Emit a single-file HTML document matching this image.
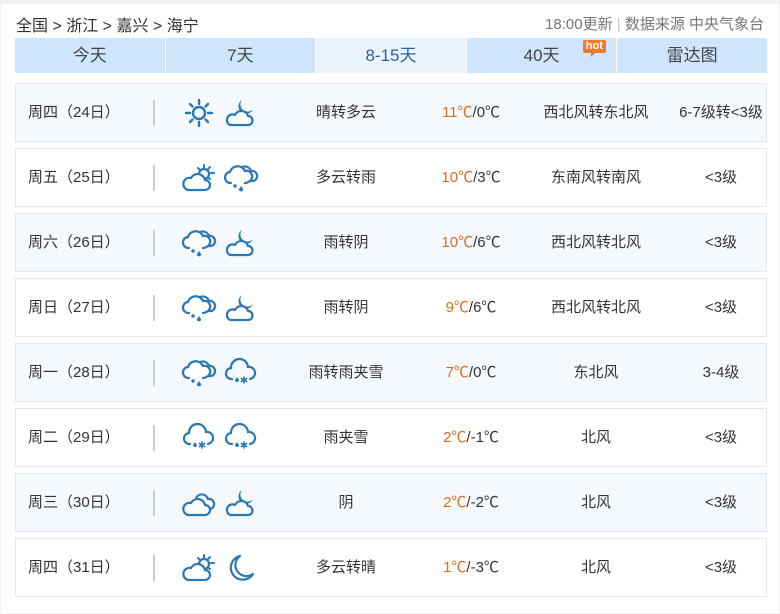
<!DOCTYPE html>
<html><head><meta charset="utf-8">
<style>
*{margin:0;padding:0;box-sizing:border-box}
body{width:780px;height:614px;background:#fff;font-family:"Liberation Sans","Noto Sans CJK SC",sans-serif;color:#333;position:relative;overflow:hidden}
.frame{position:absolute;left:0;top:0;width:780px;height:614px;border:1px solid #eef1f4;border-top:4px solid #eef1f4}
.crumb{position:absolute;left:16px;top:12px;font-size:16px;color:#333}
.src{position:absolute;right:16px;top:13px;font-size:15px;color:#777}
.tabs{position:absolute;left:15px;top:38px;width:752px;height:35px;display:flex}
.tab{flex:1;background:#cde6fb;text-align:center;line-height:35px;font-size:17px;color:#444;margin-right:1px;position:relative}
.tab:last-child{margin-right:0}
.tab.on{background:#eaf4fd;color:#2f5f9e}
.hot{position:absolute;left:116px;top:2px;background:#f27a2a;color:#fff;font-size:11px;line-height:13px;padding:0 3px;border-radius:2px;font-weight:bold}
.hot:after{content:"";position:absolute;left:8px;bottom:-4px;border:3px solid transparent;border-top-color:#f27a2a;border-left-color:#f27a2a}
.row{position:absolute;left:15px;width:752px;height:59px;border:1px solid #e4e8ec;font-size:15px;color:#333}
.row.a{background:#f5f9fd}
.row.b{background:#fff}
.row div{position:absolute;top:0;line-height:57px}
.day{left:12px}
.sep{left:137px;top:16px!important;width:2px;height:26px;background:#ccc}
.i1{left:165px;top:12px!important}
.i2{left:207px;top:12px!important}
.wx{left:250px;width:160px;text-align:center}
.tp{left:395px;width:120px;text-align:center}
.tp b{font-weight:normal;color:#e06b1e}
.wd{left:515px;width:130px;text-align:center}
.lv{left:640px;width:130px;text-align:center}
svg.ic{width:36px;height:32px}
</style></head><body>
<svg width="0" height="0" style="position:absolute">
<defs>
<symbol id="sun" viewBox="0 0 36 32"><g stroke="#2a78b5" stroke-width="2.4" fill="none" stroke-linecap="round"><circle cx="18" cy="16" r="6"/><path d="M18,3v4M18,25v4M5,16h4M27,16h4M9,7l2.5,2.5M24.5,22.5L27,25M27,7l-2.5,2.5M11.5,22.5L9,25"/></g></symbol>
<symbol id="cmoon" viewBox="0 0 36 32"><path d="M19,3 A7.5,7.5 0 1 0 30,12 A6,6 0 0 1 19,3Z" fill="#2a78b5"/><path d="M7,28 H25 A4.5,4.5 0 0 0 25,19 A7,7 0 0 0 12,18 A5,5 0 0 0 7,28 Z" fill="#fff" stroke="#2a78b5" stroke-width="2.2" stroke-linejoin="round"/></symbol>
<symbol id="csun" viewBox="0 0 36 32"><g stroke="#2a78b5" stroke-width="2" stroke-linecap="round"><path d="M23,3v3M30,11h3M17,6l2,2M29,5l-2,2M29,17l-2-1.5"/></g><circle cx="23" cy="12" r="5" fill="#fff" stroke="#2a78b5" stroke-width="2.2"/><path d="M7,28 H24 A5,5 0 0 0 24,18 A7.5,7.5 0 0 0 10,16 A6,6 0 0 0 7,28 Z" fill="#fff" stroke="#2a78b5" stroke-width="2.2"/></symbol>
<symbol id="rain" viewBox="0 0 36 32"><path d="M16,8 A6.5,6.5 0 0 1 28,9 A5,5 0 0 1 30,19 H27" fill="none" stroke="#2a78b5" stroke-width="2.2"/><path d="M8,21 A5.5,5.5 0 0 1 7,10 A8,8 0 0 1 22,9 A5.5,5.5 0 0 1 25,20 Q24,21 22,21" fill="#fff" stroke="#2a78b5" stroke-width="2.2" stroke-linecap="round"/><circle cx="12" cy="24" r="1.7" fill="#2a78b5"/><path d="M18,24 l-2.2,3.2 a2.2,2.2 0 0 0 4.4,0z" fill="#2a78b5"/></symbol>
<symbol id="sleet" viewBox="0 0 36 32"><path d="M9,22 A5.5,5.5 0 0 1 8,11 A8.5,8.5 0 0 1 25,10 A5.5,5.5 0 0 1 27,22" fill="none" stroke="#2a78b5" stroke-width="2.2" stroke-linecap="round"/><path d="M14,20 l-2,3 a2,2 0 0 0 4,0z" fill="#2a78b5"/><g stroke="#2a78b5" stroke-width="1.6" stroke-linecap="round"><path d="M21,20v6M18.4,21.5l5.2,3M18.4,24.5l5.2-3"/></g></symbol>
<symbol id="cloudy" viewBox="0 0 36 32"><path d="M15,11 A6.5,6.5 0 0 1 27,12 A5,5 0 0 1 29,22" fill="none" stroke="#2a78b5" stroke-width="2.2"/><path d="M7,28 H24 A5,5 0 0 0 24,18 A7.5,7.5 0 0 0 10,16 A6,6 0 0 0 7,28 Z" fill="#fff" stroke="#2a78b5" stroke-width="2.2"/></symbol>
<symbol id="moon" viewBox="0 0 36 32"><path d="M17,4 A12,12 0 1 0 30,22 A10,10 0 0 1 17,4 Z" fill="none" stroke="#2a78b5" stroke-width="2.2" stroke-linejoin="round"/></symbol>
</defs></svg>
<div class="frame"></div>
<div class="crumb">全国 &gt; 浙江 &gt; 嘉兴 &gt; 海宁</div>
<div class="src">18:00更新 <span style="color:#ccc">|</span> 数据来源 中央气象台</div>
<div class="tabs"><div class="tab">今天</div><div class="tab">7天</div><div class="tab on">8-15天</div><div class="tab">40天<span class="hot">hot</span></div><div class="tab">雷达图</div></div>

<div class="row a" style="top:83px"><div class="day">周四（24日）</div><div class="sep"></div><div class="i1"><svg class="ic"><use href="#sun"/></svg></div><div class="i2"><svg class="ic"><use href="#cmoon"/></svg></div><div class="wx">晴转多云</div><div class="tp"><b>11℃</b>/0℃</div><div class="wd">西北风转东北风</div><div class="lv">6-7级转&lt;3级</div></div>
<div class="row b" style="top:148px"><div class="day">周五（25日）</div><div class="sep"></div><div class="i1"><svg class="ic"><use href="#csun"/></svg></div><div class="i2"><svg class="ic"><use href="#rain"/></svg></div><div class="wx">多云转雨</div><div class="tp"><b>10℃</b>/3℃</div><div class="wd">东南风转南风</div><div class="lv">&lt;3级</div></div>
<div class="row a" style="top:213px"><div class="day">周六（26日）</div><div class="sep"></div><div class="i1"><svg class="ic"><use href="#rain"/></svg></div><div class="i2"><svg class="ic"><use href="#cmoon"/></svg></div><div class="wx">雨转阴</div><div class="tp"><b>10℃</b>/6℃</div><div class="wd">西北风转北风</div><div class="lv">&lt;3级</div></div>
<div class="row b" style="top:278px"><div class="day">周日（27日）</div><div class="sep"></div><div class="i1"><svg class="ic"><use href="#rain"/></svg></div><div class="i2"><svg class="ic"><use href="#cmoon"/></svg></div><div class="wx">雨转阴</div><div class="tp"><b>9℃</b>/6℃</div><div class="wd">西北风转北风</div><div class="lv">&lt;3级</div></div>
<div class="row a" style="top:343px"><div class="day">周一（28日）</div><div class="sep"></div><div class="i1"><svg class="ic"><use href="#rain"/></svg></div><div class="i2"><svg class="ic"><use href="#sleet"/></svg></div><div class="wx">雨转雨夹雪</div><div class="tp"><b>7℃</b>/0℃</div><div class="wd">东北风</div><div class="lv">3-4级</div></div>
<div class="row b" style="top:408px"><div class="day">周二（29日）</div><div class="sep"></div><div class="i1"><svg class="ic"><use href="#sleet"/></svg></div><div class="i2"><svg class="ic"><use href="#sleet"/></svg></div><div class="wx">雨夹雪</div><div class="tp"><b>2℃</b>/-1℃</div><div class="wd">北风</div><div class="lv">&lt;3级</div></div>
<div class="row a" style="top:473px"><div class="day">周三（30日）</div><div class="sep"></div><div class="i1"><svg class="ic"><use href="#cloudy"/></svg></div><div class="i2"><svg class="ic"><use href="#cmoon"/></svg></div><div class="wx">阴</div><div class="tp"><b>2℃</b>/-2℃</div><div class="wd">北风</div><div class="lv">&lt;3级</div></div>
<div class="row b" style="top:538px"><div class="day">周四（31日）</div><div class="sep"></div><div class="i1"><svg class="ic"><use href="#csun"/></svg></div><div class="i2"><svg class="ic"><use href="#moon"/></svg></div><div class="wx">多云转晴</div><div class="tp"><b>1℃</b>/-3℃</div><div class="wd">北风</div><div class="lv">&lt;3级</div></div>
</body></html>
